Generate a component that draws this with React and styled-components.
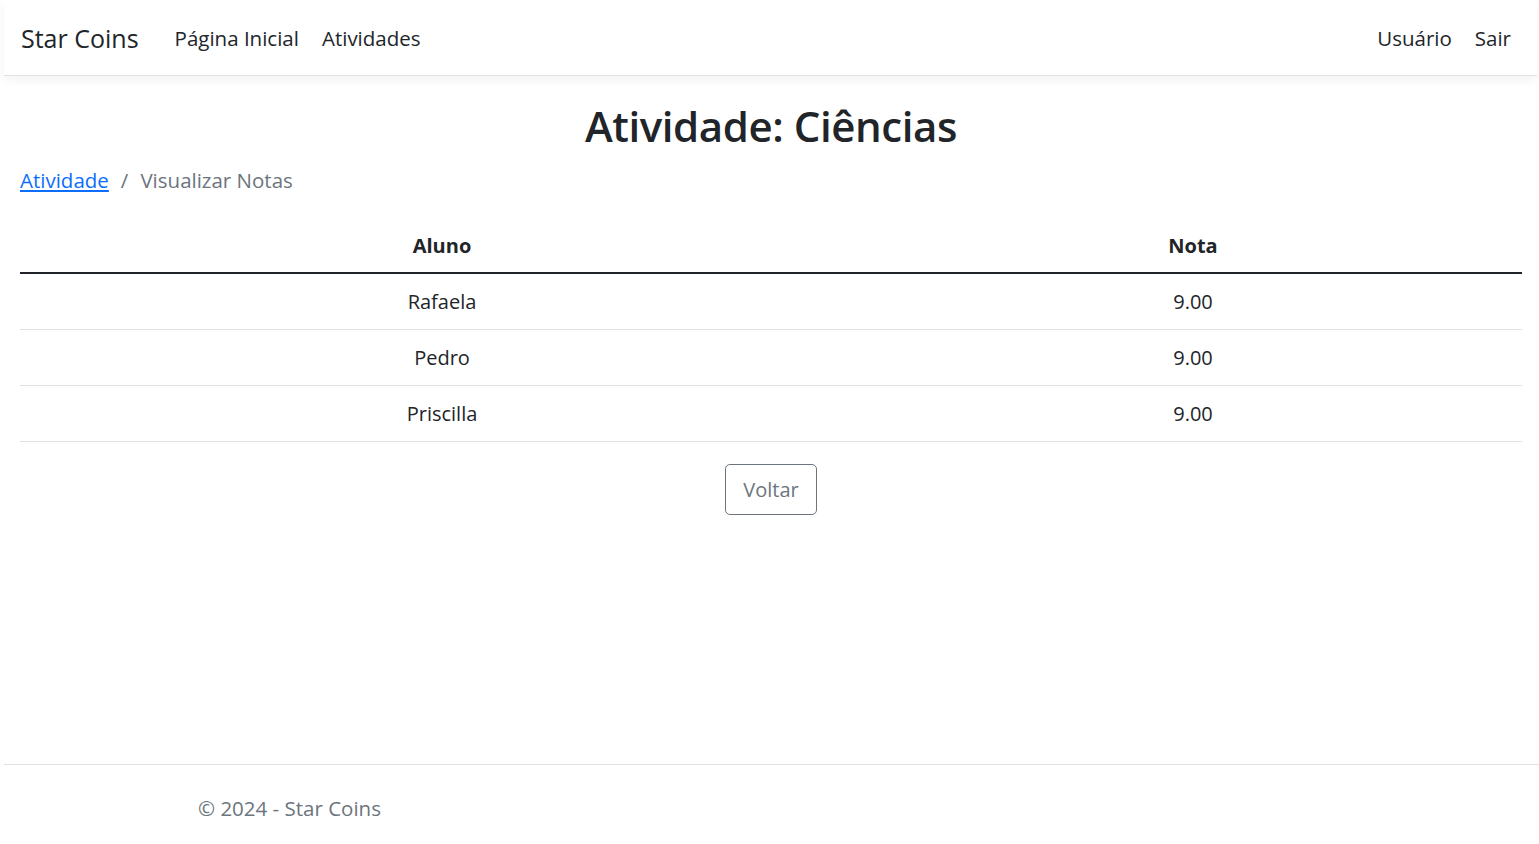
import React from 'react';
import styled, { createGlobalStyle } from 'styled-components';

const GlobalStyle = createGlobalStyle`
  * { box-sizing: border-box; }
  html, body {
    margin: 0;
    padding: 0;
    background: #ffffff;
  }
  body {
    font-family: "Open Sans", "Noto Sans", sans-serif;
    font-size: 20px;
    color: #212529;
  }
`;

const Page = styled.div`
  min-height: 844px;
  display: flex;
  flex-direction: column;
`;

const Navbar = styled.nav`
  height: 76px;
  margin: 0 2px 0 4px;
  display: flex;
  align-items: center;
  padding: 0 26px 0 17px;
  background: #ffffff;
  border-bottom: 1px solid #dee2e6;
  box-shadow: 0 4px 10px rgba(0, 0, 0, 0.05);
`;

const Brand = styled.a`
  font-size: 25px;
  color: #212529;
  text-decoration: none;
  margin-right: 36px;
`;

const NavList = styled.div`
  display: flex;
  gap: 23px;
  margin-left: ${p => (p.$right ? 'auto' : '0')};
`;

const NavLink = styled.a`
  color: #212529;
  text-decoration: none;
  font-size: 20.5px;
`;

const Main = styled.main`
  flex: 1;
  padding: 22px 17px 0 20px;
`;

const Title = styled.h1`
  margin: 0 0 11px;
  text-align: center;
  font-size: 42px;
  font-weight: 600;
  line-height: 56px;
  letter-spacing: -0.01em;
`;

const Crumbs = styled.ol`
  list-style: none;
  margin: 0 0 24px;
  padding: 0;
  display: flex;
  font-size: 20.5px;
  line-height: 30px;
  color: #6c757d;
  li + li::before {
    content: '/';
    padding: 0 12px;
    color: #6c757d;
  }
  a {
    color: #0d6efd;
    text-decoration: underline;
  }
`;

const Table = styled.table`
  width: 100%;
  border-collapse: collapse;
  th, td {
    text-align: center;
    padding: 0;
    height: 56px;
    font-size: 20px;
    border-bottom: 1px solid #dee2e6;
  }
  th {
    font-weight: 700;
    border-bottom: 2px solid #212529;
    height: 54px;
  }
  th:first-child, td:first-child {
    width: 844px;
  }
`;

const Actions = styled.div`
  display: flex;
  justify-content: center;
  margin-top: 22px;
`;

const OutlineButton = styled.button`
  font-family: inherit;
  font-size: 20px;
  color: #6c757d;
  background: transparent;
  border: 1px solid #6c757d;
  border-radius: 5px;
  width: 92px;
  height: 51px;
`;

const Footer = styled.footer`
  margin: 0 0 0 4px;
  border-top: 1px solid #dee2e6;
  height: 80px;
  padding: 28px 0 0 194px;
  line-height: 30px;
  color: #6c757d;
  font-size: 20.5px;
`;

const notas = [
  { aluno: 'Rafaela', nota: '9.00' },
  { aluno: 'Pedro', nota: '9.00' },
  { aluno: 'Priscilla', nota: '9.00' },
];

export default function App() {
  return (
    <>
      <GlobalStyle />
      <Page>
        <Navbar>
          <Brand href="#">Star Coins</Brand>
          <NavList>
            <NavLink href="#">Página Inicial</NavLink>
            <NavLink href="#">Atividades</NavLink>
          </NavList>
          <NavList $right>
            <NavLink href="#">Usuário</NavLink>
            <NavLink href="#">Sair</NavLink>
          </NavList>
        </Navbar>
        <Main>
          <Title>Atividade: Ciências</Title>
          <Crumbs>
            <li><a href="#">Atividade</a></li>
            <li>Visualizar Notas</li>
          </Crumbs>
          <Table>
            <thead>
              <tr>
                <th>Aluno</th>
                <th>Nota</th>
              </tr>
            </thead>
            <tbody>
              {notas.map(n => (
                <tr key={n.aluno}>
                  <td>{n.aluno}</td>
                  <td>{n.nota}</td>
                </tr>
              ))}
            </tbody>
          </Table>
          <Actions>
            <OutlineButton>Voltar</OutlineButton>
          </Actions>
        </Main>
        <Footer>© 2024 - Star Coins</Footer>
      </Page>
    </>
  );
}
